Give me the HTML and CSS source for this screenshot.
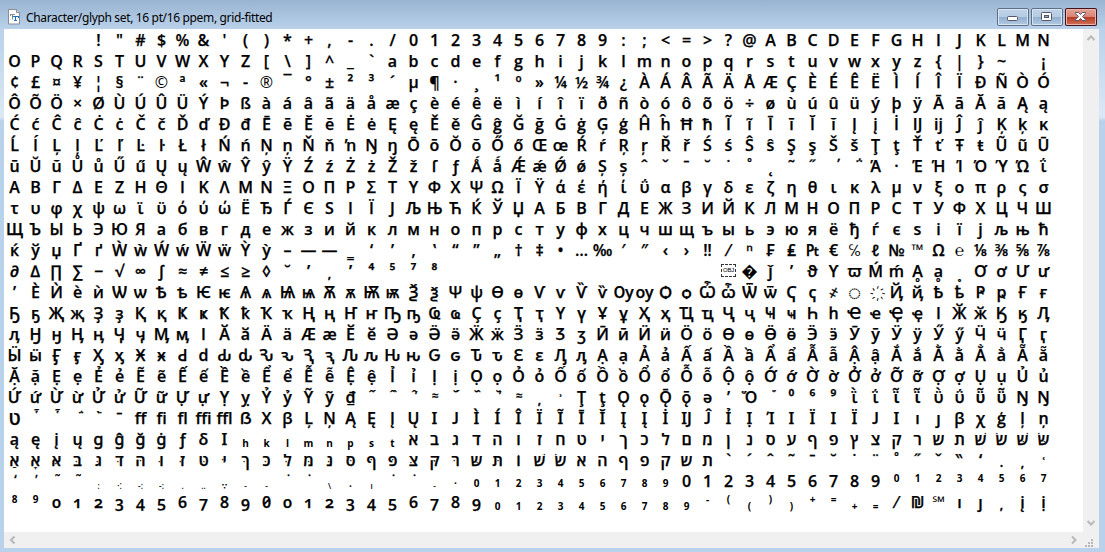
FILE: index.html
```html
<!DOCTYPE html>
<html lang="en">
<head>
<meta charset="utf-8">
<title>Character/glyph set</title>
<link rel="stylesheet" href="styles.css">
</head>
<body>
<div class="window">
  <header class="titlebar">
    <svg class="doc" width="14" height="16" viewBox="0 0 14 16">
      <path d="M.5.5h8l3 3v11.500H.5z" fill="#fdfdfd" stroke="#8b8f94"/>
      <path d="M8.500.5v3h3" fill="#ddd" stroke="#8b8f94"/>
      <path d="M2 5.500h5M2.500 5v2M4.500 5.500v5" stroke="#8a8f96" fill="none"/>
      <path d="M4.500 7.500h6M7.500 7v5M6 11.500h3M10.500 7v2" stroke="#1a6fc0" fill="none"/>
    </svg>
    <h1 class="title">Character/glyph set, 16 pt/16 ppem, grid-fitted</h1>
    <div class="buttons">
      <span class="btn"><svg width="32" height="18" viewBox="0 0 32 18"><rect x="10.500" y="8.500" width="10" height="4" rx="1" fill="#fff" stroke="#535666"/></svg></span>
      <span class="btn"><svg width="32" height="18" viewBox="0 0 32 18"><rect x="10.500" y="4.500" width="10" height="8" rx="1" fill="#fff" stroke="#535666"/><rect x="13.500" y="7.500" width="4" height="2" fill="#8fabc9" stroke="#535666"/></svg></span>
      <span class="btn close"><svg width="32" height="18" viewBox="0 0 32 18"><path d="M10.500 4.500h3l2 2 2-2h3v1L17.500 8.500l3 3v1h-3l-2-2-2 2h-3v-1l3-3-3-3z" fill="#fff" stroke="#535666"/></svg></span>
    </div>
  </header>
  <main class="client">
    <div class="grid" id="grid"></div>
    <div class="vbar">
      <svg width="16" height="16" viewBox="0 0 16 16"><path d="M4.500 11L8 7.500 11.500 11" class="arrow"/></svg>
      <svg width="16" height="16" viewBox="0 0 16 16"><path d="M4.500 5L8 8.500 11.500 5" class="arrow"/></svg>
    </div>
    <div class="hbar">
      <svg width="16" height="16" viewBox="0 0 16 16"><path d="M10.500 4.500L7 8l3.500 3.500" class="arrow"/></svg>
      <svg width="16" height="16" viewBox="0 0 16 16"><path d="M5 4.500L8.500 8 5 11.500" class="arrow"/></svg>
    </div>
    <div class="grip">
      <svg width="16" height="16" viewBox="0 0 16 16" fill="#b8b8b8"><path d="M8 6h2v2H8zM5 9h2v2H5zM8 9h2v2H8zM2 12h2v2H2zM5 12h2v2H5zM8 12h2v2H8z"/></svg>
    </div>
  </main>
</div>
<script src="glyphs.js"></script>
</body>
</html>
```
FILE: styles.css
```css
* { box-sizing: border-box; }
body {
  margin: 0;
  font-family: "Open Sans", "Noto Sans", "DejaVu Sans", sans-serif;
  color: #000;
}
.window {
  width: 1105px;
  height: 552px;
  padding: 0 6px 4px 4px;
  overflow: hidden;
  display: flex;
  flex-direction: column;
  background: linear-gradient(#99b4d1 0, #b9d1ea 29px, #dce8f5 117px, #b9d1ea 121px);
}
.titlebar {
  height: 29px;
  flex: none;
  display: flex;
  align-items: flex-start;
  padding: 8px 2px 0 4px;
}
.doc { margin-top: 1px; }
.title {
  margin: 0 0 0 4px;
  font: 400 12px/19px "Noto Sans", "Open Sans", sans-serif;
  letter-spacing: -0.35px;
  white-space: nowrap;
}
.buttons { margin-left: auto; display: flex; gap: 2px; }
.btn {
  display: block;
  width: 32px;
  height: 18px;
  border-radius: 2px;
  background: linear-gradient(#c0d4e9 0, #b6cce3 48%, #94b0cf 52%, #b5cde6 100%);
  box-shadow: inset 0 0 0 1px #5d7088, inset 0 0 0 2px #d7e4f2;
}
.btn svg { display: block; }
.close {
  background: linear-gradient(#e6a69a 0, #d98476 48%, #b83a22 52%, #d27a62 100%);
  box-shadow: inset 0 0 0 1px #43121a, inset 0 0 0 2px #e8b3a8;
}
.client {
  flex: 1;
  display: grid;
  grid-template: 503px 16px / 1079px 16px;
  background: #f0f0f0;
}
.grid {
  background: #fff;
  overflow: hidden;
  display: grid;
  grid-template-columns: repeat(50, 21px);
  grid-auto-rows: 21px;
  align-content: start;
  font-size: 16px;
  font-weight: 600;
  line-height: 21px;
  -webkit-text-stroke: 0.25px #000;
}
.cell {
  display: flex;
  justify-content: center;
  white-space: pre;
  height: 21px;
  line-height: 23px;
}
.alt { font-feature-settings: "ss01", "salt"; }
.galt { font-family: "Noto Sans", sans-serif; font-weight: 400; -webkit-text-stroke-width: 0.6px; }
.onum { font-variant-numeric: oldstyle-nums; }
.zero { font-variant-numeric: slashed-zero; }
.light { font-weight: 400; -webkit-text-stroke-width: 0; }
.tall { font-size: 19px; line-height: 23px; }
.circle { font-size: 22px; font-weight: 400; line-height: 20px; }
.dnom { font-size: 10px; line-height: 27px; font-weight: 700; }
.inf { font-size: 10px; line-height: 31px; font-weight: 700; }
.sup { font-size: 10px; line-height: 17px; font-weight: 700; }
.mark { font-size: 12px; line-height: 19px; letter-spacing: -2px; }
.low { font-size: 12px; line-height: 28px; font-weight: 700; }
.point { font-size: 8px; line-height: 32px; }
.dnom, .inf, .sup, .point { -webkit-text-stroke-width: 0; }
.obj { font: 400 6px/11px "Liberation Sans", sans-serif; align-items: center; -webkit-text-stroke-width: 0; }
.obj span {
  width: 15px;
  height: 13px;
  border: 1px dashed #333;
  text-align: center;
  letter-spacing: -0.3px;
}
.vbar, .hbar { display: flex; justify-content: space-between; background: #f0f0f0; }
.vbar { flex-direction: column; }
.arrow { fill: none; stroke: #b8b8b8; stroke-width: 2; }
```
FILE: glyphs.js
```js
// Each row lists 50 cells. "∅" is an empty cell; "class|text" styles a cell.
const range = (from, to) => {
  const out = [];
  for (let c = from; c <= to; c++) out.push(String.fromCharCode(c));
  return out.join(" ");
};
const each = (cls, text) => text.split(" ").map(t => cls + "|" + t).join(" ");
const blank = n => Array(n).fill("∅").join(" ");
const digits = "0 1 2 3 4 5 6 7 8 9";

const rows = [
  blank(4) + " " + range(0x21, 0x4e),
  range(0x4f, 0x7e) + " ∅ ¡",
  "¢ £ ¤ ¥ ¦ § ¨ light|© ª « ¬ - light|® " + range(0xaf, 0xd3),
  range(0xd4, 0x105),
  range(0x106, 0x130) + " " + range(0x132, 0x138),
  range(0x139, 0x16a),
  range(0x16b, 0x17f) + " ƒ Ǻ ǻ Ǽ ǽ Ǿ ǿ Ș ș ˆ ˇ ˉ ˘ ˙ ˚ ˛ ˜ ˝ ΄ ΅ Ά · Έ Ή Ί Ό Ύ Ώ ΐ",
  range(0x391, 0x3a1) + " " + range(0x3a3, 0x3c3),
  range(0x3c4, 0x3ce) + " Ё Ђ Ѓ Є Ѕ І Ї Ј Љ Њ Ћ Ќ Ў Џ " + range(0x410, 0x428),
  range(0x429, 0x44f) + " ё ђ ѓ є ѕ і ї ј љ њ ћ",
  "ќ ў џ Ґ ґ Ẁ ẁ Ẃ ẃ Ẅ ẅ Ỳ ỳ – — ― ‗ ‘ ’ ‚ ‛ “ ” „ † ‡ • … ‰ ′ ″ ‹ › ‼ ⁄ ⁿ ₣ ₤ ₧ € light|℅ ℓ № light|™ Ω light|℮ ⅛ ⅜ ⅝ ⅞",
  "∂ ∆ ∏ ∑ − √ ∞ ∫ ≈ ≠ ≤ ≥ ◊ ˘ ʹ low|, ʹ ⁴ ⁵ ⁷ ⁸ " + blank(13) + " obj|OBJ � ǰ ʼ ϑ ϒ ϖ Ḿ ḿ Ḁ ḁ low|˳ Ơ ơ Ư ư",
  "ʼ Ѐ Ѝ ѐ ѝ " + range(0x460, 0x482) + " circle|◌ light|\u00a0҉ " + range(0x48a, 0x48f) + " Ғ ғ",
  range(0x494, 0x4c5),
  range(0x4c6, 0x4f7),
  range(0x4f8, 0x513) + " " + range(0x1ea0, 0x1eb5),
  range(0x1eb6, 0x1ee7),
  range(0x1ee8, 0x1ef1) + " Ỵ ỵ Ỷ ỷ Ỹ ỹ ₫ mark|ˆ´ mark|ˆ` mark|ˆ’ mark|≈ mark|˘´ mark|˘` mark|˘’ mark|≈ low|, low|ʾ Ţ ţ Ǫ ǫ Ǭ ǭ ə ʼ Ὅ mark|῞ ⁰ ⁶ ⁹ ῒ ΐ ῗ ῗ ῢ ΰ ῧ ῧ Ŋ alt|Ŋ",
  "tall|ט mark|῟ mark|῟ mark|΅ mark|῭ ˉ ff fi fl ffi ffl ẞ Χ β Ļ Ņ Ą Ę Į Ų " + each("alt", "I J Ì Í Î Ï Ĩ Ī Ĭ Į Į İ Ĳ Ĵ Ỉ Ị Ί I Ï I Ï J I") + " ı ȷ β χ ģ ļ ņ",
  "ą ę į ų " + each("galt", "g ĝ ğ ġ") + " ƒ δ alt|I " + each("inf", "h k l m n p s t") + " א ב ג ד ה ו ז ח ט י ך כ ל ם מ ן נ ס ע ף פ ץ צ ק ר ש ת שׁ שׂ שּׁ שּׂ",
  "אַ אָ אּ בּ גּ דּ הּ וּ זּ טּ יּ ךּ כּ לּ מּ נּ סּ ףּ פּ צּ קּ רּ שּ תּ וֹ שׁ שׂ א ה ף פ ק ש ת ` ´ ˆ ˜ ˉ ˘ ˙ ¨ ˚ ˝ ˇ ‶ ʻ low|. low|, low|ʿ",
  "mark|ʻ mark|ʼ mark|˜ mark|˜ point|: point|⁖ point|-: point|-: point|. point|.. point|∵ point|- point|- mark|˙ mark|˙ point|\\ dnom|. point|ı mark|˙ mark|˙ point|- dnom|· " + each("dnom", digits) + " " + digits + " " + each("sup", "0 1 2 3 4 5 6 7"),
  each("sup", "8 9") + " " + each("onum", digits) + " zero|0 " + each("onum", digits) + " " + each("inf", digits) + " sup|- sup|( inf|( sup|) inf|) sup|+ sup|= inf|+ inf|= ⁄ ₪ light|℠ ı ȷ low|, į ị"
];

const grid = document.getElementById("grid");
for (const row of rows) {
  for (const token of row.split(" ")) {
    const cell = document.createElement("div");
    cell.className = "cell";
    const bar = token.indexOf("|");
    if (token !== "∅") {
      const span = document.createElement("span");
      span.textContent = bar > 0 ? token.slice(bar + 1) : token;
      if (bar > 0) cell.classList.add(token.slice(0, bar));
      cell.append(span);
    }
    grid.append(cell);
  }
}
```
